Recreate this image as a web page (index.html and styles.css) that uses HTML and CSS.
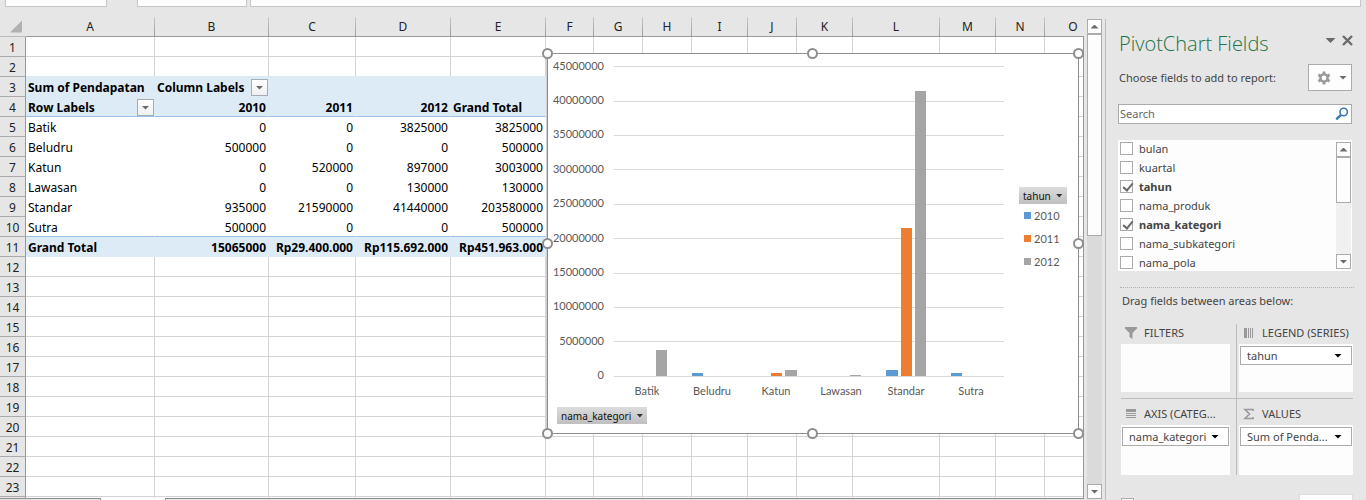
FILE: index.html
```html
<!DOCTYPE html>
<html lang="en">
<head>
<meta charset="utf-8">
<title>PivotChart Fields</title>
<link rel="stylesheet" href="styles.css">
</head>
<body>
<div class="app">
  <div class="formula-bar">
    <div class="name-box"></div>
    <div class="formula-tools"></div>
    <div class="formula-input"></div>
  </div>
  <div class="main">
    <main class="workbook">
      <div class="sheet">
        <table class="grid">
          <colgroup id="cols"></colgroup>
          <thead><tr id="letters"></tr></thead>
          <tbody id="rows"></tbody>
        </table>
        <div class="sheet-edge"></div>
        <section class="chart" aria-label="Pivot chart">
          <svg class="plot" viewBox="0 0 465 350" role="img" aria-label="Pendapatan per kategori">
            <g class="gridlines">
              <path d="M66 12.5H456M66 47.5H456M66 81.5H456M66 115.5H456M66 150.5H456M66 184.5H456M66 219.5H456M66 253.5H456M66 287.5H456M66 322.5H456"/>
            </g>
            <g class="value-axis">
              <text x="56" y="16">45000000</text>
              <text x="56" y="50">40000000</text>
              <text x="56" y="84">35000000</text>
              <text x="56" y="119">30000000</text>
              <text x="56" y="153">25000000</text>
              <text x="56" y="188">20000000</text>
              <text x="56" y="222">15000000</text>
              <text x="56" y="256">10000000</text>
              <text x="56" y="291">5000000</text>
              <text x="56" y="325">0</text>
            </g>
            <g class="series-2010">
              <rect x="144" y="319" width="11" height="3"/>
              <rect x="338" y="316" width="12" height="6"/>
              <rect x="403" y="319" width="11" height="3"/>
            </g>
            <g class="series-2011">
              <rect x="223" y="319" width="11" height="3"/>
              <rect x="353" y="174" width="11" height="148"/>
            </g>
            <g class="series-2012">
              <rect x="108" y="296" width="11" height="26"/>
              <rect x="237" y="316" width="12" height="6"/>
              <rect x="302" y="321" width="11" height="1"/>
              <rect x="367" y="37" width="11" height="285"/>
            </g>
            <g class="category-axis">
              <text x="99" y="341">Batik</text>
              <text x="164" y="341">Beludru</text>
              <text x="228" y="341">Katun</text>
              <text x="293" y="341">Lawasan</text>
              <text x="358" y="341">Standar</text>
              <text x="423" y="341">Sutra</text>
            </g>
          </svg>
          <div class="legend">
            <button class="chart-button" type="button">tahun <i class="caret"></i></button>
            <ul class="legend-list">
              <li><i class="key key-2010"></i>2010</li>
              <li><i class="key key-2011"></i>2011</li>
              <li><i class="key key-2012"></i>2012</li>
            </ul>
          </div>
          <div class="axis-field">
            <button class="chart-button" type="button">nama_kategori <i class="caret"></i></button>
          </div>
          <i class="handle top left"></i><i class="handle top center"></i><i class="handle top right"></i>
          <i class="handle middle left"></i><i class="handle middle right"></i>
          <i class="handle bottom left"></i><i class="handle bottom center"></i><i class="handle bottom right"></i>
        </section>
      </div>
      <div class="tabs"><div class="tab"></div><div class="tab-active"></div><div class="tab-rest"></div></div>
    </main>
    <div class="scrollbar sheet-scroll">
      <button class="scroll-button" type="button" aria-label="Scroll up"><i class="arrow-up"></i></button>
      <div class="thumb"></div>
      <div class="track"></div>
      <button class="scroll-button" type="button" aria-label="Scroll down"><i class="arrow-down"></i></button>
    </div>
    <aside class="pane">
      <header class="pane-head">
        <h1>PivotChart Fields</h1>
        <button class="icon-button" type="button" aria-label="Task pane options"><i class="arrow-down wide"></i></button>
        <button class="icon-button" type="button" aria-label="Close">
          <svg width="11" height="11" viewBox="0 0 11 11"><path d="M1 1L10 10M10 1L1 10" fill="none" stroke="#6a6a6a" stroke-width="2.4"/></svg>
        </button>
      </header>
      <div class="choose">
        <span>Choose fields to add to report:</span>
        <button class="tools" type="button" aria-label="Tools">
          <svg width="14" height="14" viewBox="0 0 14 14"><g fill="none" stroke="#9a9a9a"><circle cx="7" cy="7" r="3.6" stroke-width="2.4"/><path d="M7 .5V3M7 11v2.500M1.400 3.700L3.600 5M10.400 9l2.200 1.300M1.400 10.300L3.600 9M10.400 5l2.200-1.300" stroke-width="2.800"/></g></svg>
          <i class="arrow-down"></i>
        </button>
      </div>
      <div class="search">
        <input type="text" placeholder="Search" aria-label="Search">
        <svg width="14" height="14" viewBox="0 0 14 14"><g fill="none" stroke="#3c78b8"><circle cx="8.700" cy="5" r="3.700" stroke-width="1.600"/><path d="M6 8L1.200 12.300" stroke-width="2.400"/></g></svg>
      </div>
      <div class="fields">
        <ul>
          <li><label><input type="checkbox">bulan</label></li>
          <li><label><input type="checkbox">kuartal</label></li>
          <li><label><input type="checkbox" checked><b>tahun</b></label></li>
          <li><label><input type="checkbox">nama_produk</label></li>
          <li><label><input type="checkbox" checked><b>nama_kategori</b></label></li>
          <li><label><input type="checkbox">nama_subkategori</label></li>
          <li><label><input type="checkbox">nama_pola</label></li>
        </ul>
        <div class="scrollbar list-scroll">
          <button class="scroll-button" type="button" aria-label="Scroll up"><i class="arrow-up"></i></button>
          <div class="thumb"></div>
          <div class="track"></div>
          <button class="scroll-button" type="button" aria-label="Scroll down"><i class="arrow-down"></i></button>
        </div>
      </div>
      <p class="drag">Drag fields between areas below:</p>
      <div class="areas">
        <section class="area">
          <h2><svg width="12" height="12" viewBox="0 0 12 12"><path d="M0 0h12v1.500L7.500 6v6L4.500 10V6L0 1.500z" fill="#999"/></svg><span>FILTERS</span></h2>
          <div class="drop"></div>
        </section>
        <section class="area">
          <h2><svg width="12" height="12" viewBox="0 0 12 12"><path d="M1 1h3v10H1zM5 1h1v10H5zM7 1h1v10H7zM9 1h1v10H9z" fill="#999"/></svg><span>LEGEND (SERIES)</span></h2>
          <div class="drop"><button class="pill" type="button"><span>tahun</span><i class="arrow-down"></i></button></div>
        </section>
        <section class="area">
          <h2><svg width="12" height="12" viewBox="0 0 12 12"><path d="M1 1h10v3H1zM1 5h10v1H1zM1 7h10v1H1zM1 9h10v1H1z" fill="#999"/></svg><span>AXIS (CATEG...</span></h2>
          <div class="drop"><button class="pill" type="button"><span>nama_kategori</span><i class="arrow-down"></i></button></div>
        </section>
        <section class="area">
          <h2><svg width="12" height="12" viewBox="0 0 12 12"><path d="M10 3V1.500H2L6.500 6L2 10.500h8V9" fill="none" stroke="#999" stroke-width="1.600"/></svg><span>VALUES</span></h2>
          <div class="drop"><button class="pill" type="button"><span>Sum of Penda...</span><i class="arrow-down"></i></button></div>
        </section>
      </div>
      <footer class="pane-foot">
        <input type="checkbox" aria-label="Defer layout update">
        <button class="update" type="button" aria-label="Update"></button>
      </footer>
    </aside>
  </div>
</div>
<script src="sheet.js"></script>
</body>
</html>
```
FILE: styles.css
```css
* { box-sizing: border-box; }
body {
  margin: 0;
  background: #e6e6e6;
  color: #444;
  font-family: "Noto Sans", "Open Sans", sans-serif;
  font-size: 11px;
}
button, input { font: inherit; color: inherit; margin: 0; }
button { padding: 0; border: 0; background: none; border-radius: 0; }
ul { list-style: none; margin: 0; padding: 0; }
i { display: block; flex: none; }

.app { display: flex; flex-direction: column; height: 100vh; overflow: hidden; }

.formula-bar { display: flex; flex: none; height: 7px; padding: 0 5px; }
.formula-bar div { background: #fdfdfd; border: 1px solid #c6c6c6; border-top: 0; }
.name-box { width: 102px; margin-right: 30px; }
.formula-tools { width: 110px; margin-right: 3px; }
.formula-input { flex: 1; }

.main { display: flex; flex: 1; min-height: 0; }
.workbook { display: flex; flex-direction: column; flex: 1; min-width: 0; padding-top: 10px; }
.sheet { position: relative; flex: 1; min-height: 0; overflow: hidden; }
.sheet-edge { position: absolute; top: 19px; right: 0; bottom: 0; width: 1px; background: #999; }

/* Worksheet cells */
.grid {
  table-layout: fixed;
  width: 1102px;
  border-collapse: separate;
  border-spacing: 0;
  font-size: 12px;
  line-height: 17px;
  color: #000;
}
.grid th, .grid td { height: 20px; padding: 2px 2px 0; white-space: nowrap; }
.grid th { font-weight: 400; text-align: center; color: #222; background: #e6e6e6; }
.grid thead th {
  padding-top: 0;
  border-right: 1px solid;
  border-bottom: 1px solid #999;
  border-image: linear-gradient(#ccc, #999) 1;
}
.grid thead th:first-child { border-image: none; border-right-color: transparent; border-bottom-color: #bbb; padding: 0 3px; }
.grid tbody th {
  border-right: 1px solid #999;
  border-bottom: 1px solid #aaa;
  padding: 2px 0 0;
}
.select-all { width: 12px; height: 12px; margin-left: auto; background: #b1b1b1; clip-path: polygon(100% 0, 100% 100%, 0 100%); }
.grid td { background: #fff; border-right: 1px solid #d4d4d4; border-bottom: 1px solid #d4d4d4; text-align: right; }
.grid td.pivot { border-color: transparent; }
.grid td.shade { background: #ddebf7; font-weight: 700; }
.grid td.above { border-bottom-color: #ddebf7; }
.grid td.rule { border-bottom-color: #9bc2e6; }
.grid td.text { text-align: left; }
.cell { display: flex; align-items: center; justify-content: space-between; height: 17px; }
.filter {
  display: flex; align-items: center; justify-content: center;
  width: 17px; height: 17px; margin-right: -2px;
  border: 1px solid #a6acb4; background: linear-gradient(#fff, #eef0f4);
}

/* Chart object */
.chart {
  position: absolute; left: 547px; top: 36px; width: 532px;
  display: grid; grid-template-columns: 465px 1fr; grid-template-rows: 350px auto;
  background: #fff; border: 1px solid #8e8e8e; box-shadow: -1px 0 #d0d0d0;
  font-family: Lato, sans-serif; font-size: 11px; color: #595959;
}
.plot { width: 465px; height: 350px; display: block; }
.plot text { fill: #595959; }
.gridlines { stroke: #d9d9d9; fill: none; }
.value-axis { text-anchor: end; }
.category-axis { text-anchor: middle; }
.series-2010 { fill: #5b9bd5; }
.series-2011 { fill: #ed7d31; }
.series-2012 { fill: #a5a5a5; }
.legend { padding: 133px 0 0 6px; }
.legend-list { padding-left: 5px; }
.legend-list li { display: flex; align-items: center; gap: 3px; height: 23px; }
.key { width: 7px; height: 7px; }
.key-2010 { background: #5b9bd5; }
.key-2011 { background: #ed7d31; }
.key-2012 { background: #a5a5a5; }
.axis-field { grid-column: 1 / -1; padding: 3px 0 9px 9px; }
.chart-button {
  display: flex; align-items: center; gap: 5px; height: 17px; padding: 0 4px;
  background: linear-gradient(#dcdcdc, #bfbfbf); color: #111;
  font-family: "Noto Sans", sans-serif; font-size: 10px;
}
.caret { width: 7px; height: 4px; background: #333; clip-path: polygon(0 0, 100% 0, 50% 100%); }
.handle { position: absolute; width: 11px; height: 11px; border: 2px solid #8e8e8e; border-radius: 50%; background: #fff; }
.handle.top { top: -6px; }
.handle.middle { top: calc(50% - 6px); }
.handle.bottom { bottom: -6px; }
.handle.left { left: -6px; }
.handle.center { left: calc(50% - 6px); }
.handle.right { right: -6px; }

.tabs { display: flex; flex: none; height: 2px; }
.tab { width: 101px; border-top: 1px solid #8e8e8e; border-right: 1px solid #8e8e8e; }
.tab-active { width: 64px; background: #fff; }
.tab-rest { flex: 1; border-top: 1px solid #8e8e8e; border-left: 1px solid #8e8e8e; }

/* Scrollbars */
.scrollbar { display: flex; flex-direction: column; flex: none; width: 15px; }
.scroll-button {
  display: flex; align-items: center; justify-content: center; flex: none;
  width: 15px; height: 15px; background: #fdfdfd; border: 1px solid #ababab;
}
.thumb { flex: none; background: #fdfdfd; border: 1px solid #ababab; }
.track { flex: 1; background: #dadada; }
.arrow-up, .arrow-down { width: 8px; height: 4px; background: #6a6a6a; }
.arrow-up { clip-path: polygon(0 100%, 50% 0, 100% 100%); }
.arrow-down { clip-path: polygon(0 0, 100% 0, 50% 100%); }
.arrow-down.wide { width: 10px; height: 5px; }
.sheet-scroll { margin: 12px 3px 1px; }
.sheet-scroll .thumb { height: 202px; }
.list-scroll { padding: 2px 0; }
.list-scroll .thumb { height: 46px; }
.list-scroll .track { background: #f0f0f0; }

/* Field list pane */
.pane { flex: none; width: 261px; margin-top: 12px; padding: 12px 14px 0 12px; border-left: 1px solid #bcbcbc; }
.pane-head { display: flex; align-items: center; height: 26px; margin-right: -4px; padding-left: 1px; }
.pane-head h1 {
  flex: 1; margin: 0; color: #217346; white-space: nowrap;
  font-family: "Open Sans", "Noto Sans", sans-serif; font-weight: 300; font-size: 20px; line-height: 26px;
}
.icon-button { display: flex; align-items: center; justify-content: center; width: 17px; height: 17px; margin-bottom: 7px; }
.choose { display: flex; justify-content: space-between; align-items: center; height: 27px; margin-top: 7px; padding-left: 1px; }
.tools { display: flex; align-items: center; justify-content: space-between; width: 44px; height: 27px; padding: 0 4px 0 8px; border: 1px solid #ababab; background: #fdfdfd; }
.search { display: flex; align-items: center; height: 20px; margin-top: 13px; padding-right: 2px; border: 1px solid #ababab; background: #fff; }
.search input { flex: 1; min-width: 0; height: 18px; padding: 0 1px 2px; border: 0; outline: 0; background: none; }
.search input::placeholder { color: #666; opacity: 1; }
.fields { display: flex; justify-content: space-between; height: 131px; margin-top: 16px; padding-right: 1px; background: #fdfdfd; }
.fields ul { padding: 0 0 0 2px; }
.fields label { display: flex; align-items: center; gap: 6px; height: 19px; line-height: 19px; padding-bottom: 3px; }
.fields li { height: 19px; }
.pane input[type="checkbox"] {
  appearance: none; display: block; flex: none; position: relative;
  width: 13px; height: 13px; border: 1px solid #ababab; background: #fff;
}
.pane input[type="checkbox"]:checked::after {
  content: ""; position: absolute; left: 4px; top: 0; width: 4px; height: 8px;
  border: solid #6a6a6a; border-width: 0 2px 2px 0; transform: rotate(40deg);
}
.drag { margin: 16px -2px 0 2px; padding: 3px 2px 0; border-top: 1px dotted #b0b0b0; line-height: 19px; }
.areas { display: grid; grid-template-columns: 116px 1fr; grid-template-rows: 75px 76px; margin: 14px -1px 0 3px; }
.area { display: flex; flex-direction: column; min-width: 0; }
.area:nth-child(odd) { padding-right: 6px; border-right: 1px solid #bcbcbc; }
.area:nth-child(even) { padding-left: 2px; }
.area:nth-child(-n+2) { padding-bottom: 6px; border-bottom: 1px solid #bcbcbc; }
.area:nth-child(n+3) { padding-top: 6px; }
.area h2 { display: flex; align-items: center; gap: 7px; height: 20px; margin: 0; padding: 0 0 3px 4px; font-size: 11px; font-weight: 400; line-height: 17px; white-space: nowrap; }
.area h2 svg { flex: none; }
.drop { flex: 1; padding: 2px 1px; background: #fdfdfd; }
.pill { display: flex; align-items: center; justify-content: space-between; width: 100%; height: 19px; padding: 0 9px 0 6px; border: 1px solid #ababab; background: #fff; white-space: nowrap; }
.pill .arrow-down { background: #000; }
.pane-foot { display: flex; justify-content: space-between; align-items: flex-start; margin: 19px -1px 0 3px; }
.pane-foot input { margin-top: 4px; }
.update { width: 54px; height: 22px; background: #fdfdfd; border: 1px solid #dcdcdc; }
```
FILE: sheet.js
```js
const widths = [26, 129, 114, 87, 95, 95, 48, 49, 49, 56, 49, 56, 87, 56, 49, 57];
const letters = "ABCDEFGHIJKLMNO".split("");
const pivot = {
  3: ["Sum of Pendapatan", "Column Labels", "", "", ""],
  4: ["Row Labels", "2010", "2011", "2012", "Grand Total"],
  5: ["Batik", "0", "0", "3825000", "3825000"],
  6: ["Beludru", "500000", "0", "0", "500000"],
  7: ["Katun", "0", "520000", "897000", "3003000"],
  8: ["Lawasan", "0", "0", "130000", "130000"],
  9: ["Standar", "935000", "21590000", "41440000", "203580000"],
  10: ["Sutra", "500000", "0", "0", "500000"],
  11: ["Grand Total", "15065000", "Rp29.400.000", "Rp115.692.000", "Rp451.963.000"]
};
const withFilter = ["Column Labels", "Row Labels"];
const lastRow = 23;

document.getElementById("cols").innerHTML = widths.map(w => `<col style="width:${w}px">`).join("");
document.getElementById("letters").innerHTML =
  '<th><div class="select-all"></div></th>' + letters.map(l => `<th>${l}</th>`).join("");

function cell(row, col) {
  const values = pivot[row];
  if (col > 4) return "<td></td>";
  if (row === 2) return '<td class="above"></td>';
  if (!values) return "<td></td>";
  const text = values[col];
  const classes = ["pivot"];
  if (row < 5 || row === 11) classes.push("shade");
  if (row === 4 || row === 10) classes.push("rule");
  if (col === 0 || /^[CG]/.test(text)) classes.push("text");
  const body = withFilter.includes(text)
    ? `<div class="cell">${text}<button class="filter" type="button" aria-label="Filter ${text}"><i class="arrow-down"></i></button></div>`
    : text;
  return `<td class="${classes.join(" ")}">${body}</td>`;
}

let html = "";
for (let row = 1; row <= lastRow + 1; row++) {
  const label = row > lastRow ? "" : row;
  html += `<tr><th>${label}</th>${letters.map((_, col) => cell(row, col)).join("")}</tr>`;
}
document.getElementById("rows").innerHTML = html;
```
